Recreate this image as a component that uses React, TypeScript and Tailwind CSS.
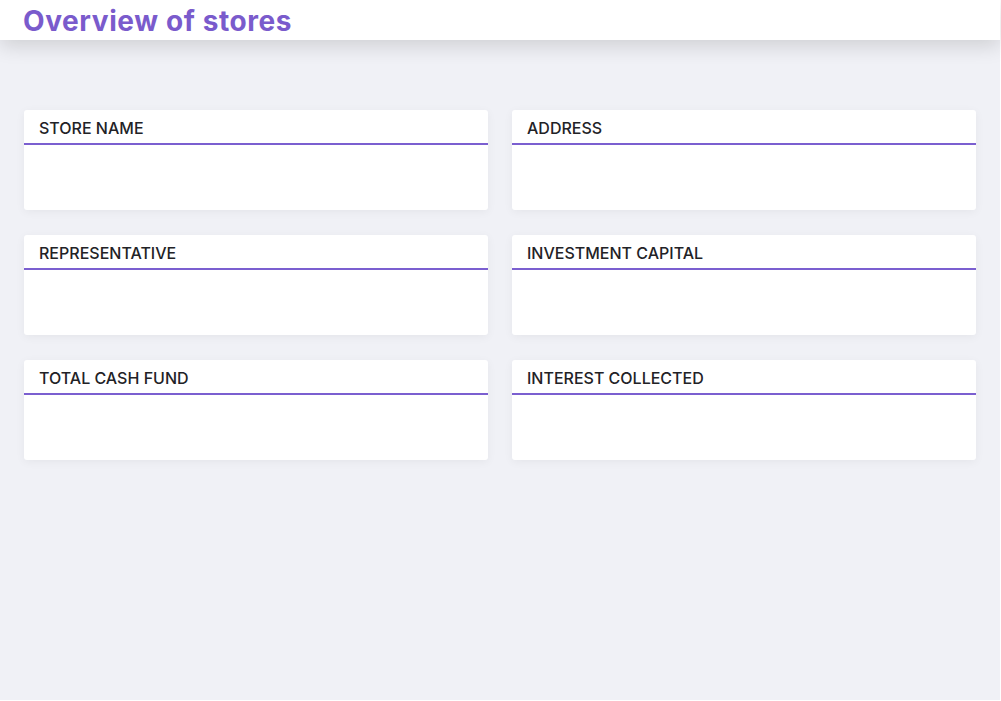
export default function App() {
  const fields = [
    'STORE NAME',
    'ADDRESS',
    'REPRESENTATIVE',
    'INVESTMENT CAPITAL',
    'TOTAL CASH FUND',
    'INTEREST COLLECTED',
  ];

  return (
    <div className="w-[1000px] h-[700px] bg-[#f0f1f6] font-['Inter',sans-serif]">
      <header className="h-10 bg-white shadow-[0_6px_20px_rgba(0,0,0,0.14)] px-[23px] flex items-center relative">
        <h1 className="text-[28px] leading-none font-bold text-[#7a5bcc] tracking-[0.6px] mt-[1px]">Overview of stores</h1>
      </header>

      <div className="grid grid-cols-2 gap-x-[24px] gap-y-[25px] pt-[70px] px-[24px]">
        {fields.map((f) => (
          <div key={f} className="h-[100px] bg-white rounded-[3px] shadow-[0_2px_10px_rgba(0,0,0,0.05)]">
            <div className="h-[35px] border-b-2 border-[#7b5fd0] flex items-center px-[15px] pt-[2px]">
              <span className="text-[16px] font-medium text-[#222226]">{f}</span>
            </div>
          </div>
        ))}
      </div>
    </div>
  );
}
